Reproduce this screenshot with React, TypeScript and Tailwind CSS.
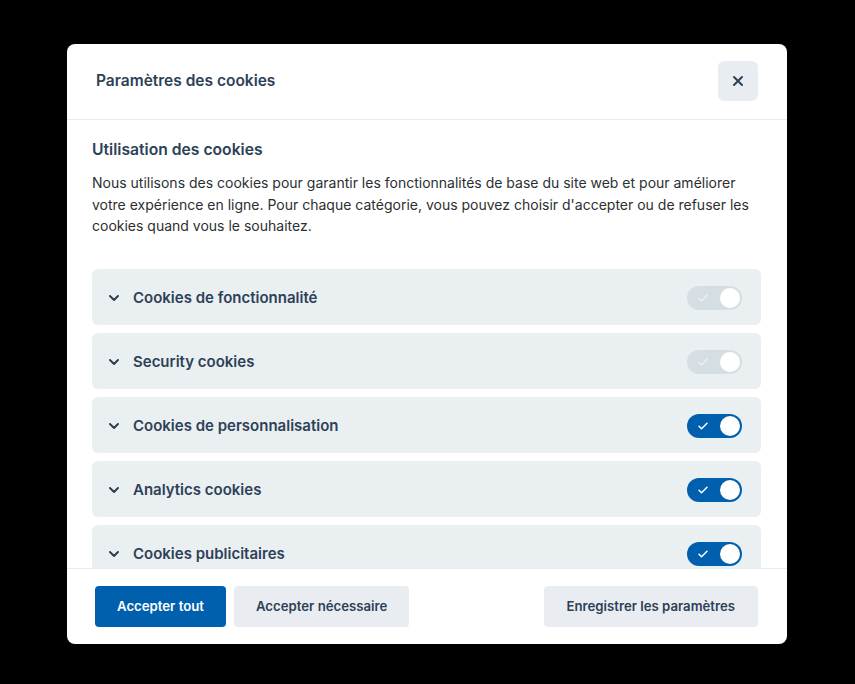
import { ChevronDown } from 'lucide-react';

type Category = { title: string; enabled: boolean; readOnly?: boolean };

const categories: Category[] = [
    { title: 'Cookies de fonctionnalité', enabled: true, readOnly: true },
    { title: 'Security cookies', enabled: true, readOnly: true },
    { title: 'Cookies de personnalisation', enabled: true },
    { title: 'Analytics cookies', enabled: true },
    { title: 'Cookies publicitaires', enabled: true },
    { title: 'Autres cookies', enabled: false },
];

function Toggle({ enabled, readOnly }: { enabled: boolean; readOnly?: boolean }) {
    const track = readOnly ? 'bg-[#d5dee2]' : enabled ? 'bg-[#0060ae]' : 'bg-[#919ea6]';
    return (
        <span className={`relative flex h-[24px] w-[55px] shrink-0 items-center rounded-full ${track}`}>
            <svg
                viewBox="0 0 24 24"
                className={`absolute left-[10px] h-[12px] w-[12px] ${readOnly ? 'text-[#eef1f3]' : 'text-white'}`}
                fill="none"
                stroke="currentColor"
                strokeWidth={3}
                strokeLinecap="round"
                strokeLinejoin="round"
            >
                <path d="M4 12.5l5 5L20 6.5" />
            </svg>
            <span className="absolute right-[2px] h-[20px] w-[20px] rounded-full bg-white" />
        </span>
    );
}

export default function App() {
    return (
        <div
            className="flex h-[684px] w-full bg-black pl-[67px] pt-[44px]"
            style={{ fontFamily: 'Inter, "Liberation Sans", sans-serif' }}
        >
            <div className="flex h-[600px] w-[720px] flex-col overflow-hidden rounded-[8px] bg-white">
                <header className="flex h-[76px] shrink-0 items-center justify-between border-b border-[#e8ecef] px-[29px] pb-[2px]">
                    <h2 className="text-[15.5px] font-semibold text-[#2d4156]">Paramètres des cookies</h2>
                    <button
                        type="button"
                        className="flex h-[40px] w-[40px] items-center justify-center rounded-[6px] bg-[#e9edf2] text-[#2d4156]"
                    >
                        <svg viewBox="0 0 12 12" className="h-[12px] w-[12px]" fill="none" stroke="currentColor" strokeWidth={2} strokeLinecap="round">
                            <path d="M2 2l8 8M10 2l-8 8" />
                        </svg>
                    </button>
                </header>

                <div className="min-h-0 flex-1 overflow-hidden pl-[25px] pr-[26px] pt-[20px]">
                    <h3 className="text-[15.7px] font-semibold leading-[20px] text-[#2d4156]">Utilisation des cookies</h3>
                    <p className="mt-[12px] text-[14px] leading-[21.5px] text-[#2c2f31]">
                        Nous utilisons des cookies pour garantir les fonctionnalités de base du site web et pour améliorer
                        votre expérience en ligne. Pour chaque catégorie, vous pouvez choisir d'accepter ou de refuser les
                        cookies quand vous le souhaitez.
                    </p>

                    <div className="mt-[32px] flex flex-col gap-[8px]">
                        {categories.map((c) => (
                            <div
                                key={c.title}
                                className="flex h-[56px] shrink-0 items-center justify-between rounded-[6px] bg-[#eaeff2] pl-[14px] pr-[19px] pt-[3px]"
                            >
                                <div className="flex items-center gap-[11px]">
                                    <ChevronDown className="h-[16px] w-[16px] text-[#2d4156]" strokeWidth={3} />
                                    <span className="text-[15px] font-semibold text-[#2d4156]">{c.title}</span>
                                </div>
                                <Toggle enabled={c.enabled} readOnly={c.readOnly} />
                            </div>
                        ))}
                    </div>
                </div>

                <footer className="flex h-[76px] shrink-0 items-center justify-between border-t border-[#e8ecef] pl-[28px] pr-[29px]">
                    <div className="flex gap-[8px]">
                        <button
                            type="button"
                            className="h-[41px] whitespace-nowrap rounded-[4px] bg-[#0060ae] px-[22px] text-[13.2px] font-semibold text-white"
                        >
                            Accepter tout
                        </button>
                        <button
                            type="button"
                            className="h-[41px] whitespace-nowrap rounded-[4px] bg-[#e9edf2] px-[22px] text-[13.2px] font-semibold text-[#2d4156]"
                        >
                            Accepter nécessaire
                        </button>
                    </div>
                    <button
                        type="button"
                        className="h-[41px] whitespace-nowrap rounded-[4px] bg-[#e9edf2] px-[23px] text-[13.2px] font-semibold text-[#2d4156]"
                    >
                        Enregistrer les paramètres
                    </button>
                </footer>
            </div>
        </div>
    );
}
